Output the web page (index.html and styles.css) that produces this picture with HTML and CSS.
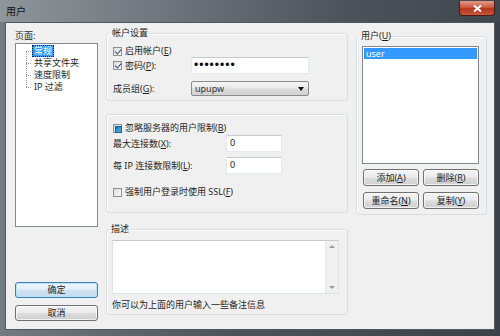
FILE: index.html
```html
<!DOCTYPE html>
<html lang="zh-CN">

<head>
  <meta charset="UTF-8" />
  <title>用户</title>
  <link rel="stylesheet" href="styles.css">
</head>

<body>
  <div class="window">
    <div class="titlebar">
      <span class="title">用户</span>
      <div class="close">
        <svg width="11" height="9" viewBox="0 0 11 9"><path d="M2 1.5 L9 7.5 M9 1.5 L2 7.5" stroke="#fff" stroke-width="2" /></svg>
      </div>
    </div>

    <div class="client">
      <!-- Page tree + dialog buttons -->
      <div class="col-pages">
        <div class="caption">页面:</div>
        <div class="tree">
          <ul>
            <li><span class="selected">常规</span></li>
            <li><span>共享文件夹</span></li>
            <li><span>速度限制</span></li>
            <li><span>IP 过滤</span></li>
          </ul>
        </div>
        <div class="dialog-buttons">
          <div class="btn default">确定</div>
          <div class="btn">取消</div>
        </div>
      </div>

      <!-- General settings -->
      <div class="col-settings">
        <fieldset class="group account">
          <legend>帐户设置</legend>
          <div class="check-row"><span class="check checked"></span>启用帐户(<u>E</u>)</div>
          <div class="field-row">
            <div class="check-row field-label"><span class="check checked"></span>密码(<u>P</u>):</div>
            <div class="input password">••••••••</div>
          </div>
          <div class="field-row group-row">
            <span class="field-label">成员组(<u>G</u>):</span>
            <div class="combo">upupw<span class="arrow"></span></div>
          </div>
        </fieldset>

        <fieldset class="group limits">
          <div class="check-row"><span class="check partial"></span>忽略服务器的用户限制(<u>B</u>)</div>
          <div class="field-row max-row">
            <span class="field-label">最大连接数(<u>X</u>):</span>
            <div class="input number">0</div>
          </div>
          <div class="field-row ip-row">
            <span class="field-label">每 IP 连接数限制(<u>L</u>):</span>
            <div class="input number">0</div>
          </div>
          <div class="check-row ssl-row"><span class="check"></span>强制用户登录时使用 SSL(<u>F</u>)</div>
        </fieldset>

        <fieldset class="group notes">
          <legend>描述</legend>
          <div class="memo">
            <div class="memo-text"></div>
            <div class="scrollbar">
              <span class="arrow-up"></span>
              <span class="arrow-down"></span>
            </div>
          </div>
          <div class="hint">你可以为上面的用户输入一些备注信息</div>
        </fieldset>
      </div>

      <!-- User list -->
      <div class="col-users">
        <fieldset class="group users">
          <legend>用户(<u>U</u>)</legend>
          <div class="listbox">
            <div class="list-item selected">user</div>
          </div>
          <div class="user-buttons">
            <div class="btn">添加(<u>A</u>)</div>
            <div class="btn">删除(<u>R</u>)</div>
            <div class="btn">重命名(<u>N</u>)</div>
            <div class="btn">复制(<u>Y</u>)</div>
          </div>
        </fieldset>
      </div>
    </div>
  </div>
</body>

</html>
```

FILE: styles.css
```css
/* Base */
* {
  box-sizing: border-box;
}

body {
  margin: 0;
  background: #3a4148;
  font-family: "Noto Sans", "Noto Sans CJK SC", sans-serif;
  font-size: 9px;
  line-height: 12px;
  color: #1e1e1e;
}

u {
  text-decoration: underline;
}

/* Window frame */
.window {
  width: 500px;
  height: 336px;
  display: flex;
  flex-direction: column;
  background: linear-gradient(to right, #747b82, #4d545b 45%, #3b4249);
}

.titlebar {
  height: 22px;
  flex: none;
  display: flex;
  justify-content: space-between;
  align-items: flex-start;
  padding: 0 5px 0 6px;
  background: linear-gradient(to right, #8e959b, #6c737a 35%, #4b5259 70%, #40474e);
}

.title {
  margin-top: 5px;
  font-size: 10px;
  line-height: 12px;
  color: #121212;
}

.close {
  width: 36px;
  height: 15px;
  margin-top: 1px;
  display: flex;
  align-items: center;
  justify-content: center;
  border: 1px solid #4a1b12;
  border-top: none;
  border-radius: 0 0 4px 4px;
  background: linear-gradient(#e39a86, #cf5a40 45%, #b3341c 55%, #c9583c);
}

.client {
  flex: 1;
  margin: 0 5px 6px;
  border: 1px solid #505860;
  background: #f0f0f0;
  display: flex;
  gap: 8px;
  padding: 4px 7px 8px 9px;
}

/* Left column */
.col-pages {
  width: 83px;
  display: flex;
  flex-direction: column;
}

.caption {
  margin-top: 3px;
  height: 12px;
}

.tree {
  height: 184px;
  margin-top: 1px;
  background: #fff;
  border: 1px solid #828790;
}

.tree ul {
  position: relative;
  margin: 0;
  padding: 1px 0 0 16px;
  list-style: none;
}

.tree ul::before {
  content: "";
  position: absolute;
  left: 10px;
  top: 7px;
  height: 36px;
  border-left: 1px dotted #9a9a9a;
}

.tree li {
  position: relative;
  height: 12px;
}

.tree li::before {
  content: "";
  position: absolute;
  left: -6px;
  top: 6px;
  width: 5px;
  border-top: 1px dotted #9a9a9a;
}

.tree li span {
  display: inline-block;
  padding: 0 2px;
  height: 12px;
}

.tree li span.selected {
  background: #3399ff;
  color: #fff;
  outline: 1px dotted #1e1e1e;
  outline-offset: -1px;
}

.dialog-buttons {
  margin-top: auto;
  display: flex;
  flex-direction: column;
  gap: 7px;
}

/* Buttons */
.btn {
  height: 16px;
  display: flex;
  align-items: center;
  justify-content: center;
  border: 1px solid #707070;
  border-radius: 3px;
  background: linear-gradient(#f4f4f4, #ebebeb 48%, #dddddd 52%, #cfcfcf);
  box-shadow: inset 0 0 0 1px rgba(255, 255, 255, 0.7);
  color: #1e1e1e;
}

.btn.default {
  border-color: #3c7fb1;
  background: linear-gradient(#eef6fb, #e1eef7 48%, #cfe3f1 52%, #c3dbee);
  box-shadow: inset 0 0 0 1px #b9e3f9;
}

/* Group boxes */
.group {
  margin: 0;
  min-width: 0;
  border: 1px solid #d5dfe5;
  border-radius: 3px;
  box-shadow: inset 1px 1px 0 #fff;
}

.group legend {
  padding: 0 2px;
  margin-left: -3px;
  line-height: 12px;
}

.col-settings {
  width: 242px;
  display: flex;
  flex-direction: column;
}

.account {
  padding: 6px 0 4px 6px;
}

.limits {
  margin-top: 13px;
  padding: 7px 0 14px 6px;
}

.notes {
  margin-top: 10px;
  padding: 5px 8px 3px 5px;
}

.check-row {
  display: flex;
  align-items: center;
  height: 12px;
}

.check {
  width: 9px;
  height: 9px;
  margin-right: 3px;
  flex: none;
  border: 1px solid #8e8f8f;
  background: linear-gradient(135deg, #dcdcdc, #fbfbfb);
  position: relative;
}

.check.checked::after {
  content: "";
  position: absolute;
  left: 2px;
  top: 0;
  width: 3px;
  height: 5px;
  border: solid #33477c;
  border-width: 0 1.5px 1.5px 0;
  transform: rotate(40deg);
}

.check.partial::after {
  content: "";
  position: absolute;
  left: 1px;
  top: 1px;
  width: 5px;
  height: 5px;
  background: linear-gradient(135deg, #1f7ac4, #4fb3d9);
  border: 1px solid #1a5f93;
}

.field-row {
  display: flex;
  align-items: center;
  height: 17px;
}

.account .field-label {
  width: 78px;
}

.group-row {
  margin-top: 7px;
  height: 15px;
}

.limits .field-label {
  width: 113px;
}

.max-row {
  margin-top: 1px;
}

.ip-row {
  margin-top: 5px;
}

.ssl-row {
  margin-top: 12px;
}

/* Inputs */
.input {
  height: 17px;
  background: #fff;
  border: 1px solid #e3e9ef;
  border-top-color: #c5cad0;
}

.password {
  width: 118px;
  padding-left: 2px;
  font-family: "Liberation Sans", sans-serif;
  font-size: 12px;
  line-height: 15px;
  letter-spacing: 1px;
  color: #000;
}

.number {
  width: 56px;
  padding: 1px 3px;
  line-height: 12px;
}

.combo {
  width: 118px;
  height: 15px;
  display: flex;
  align-items: center;
  justify-content: space-between;
  padding: 0 4px 0 3px;
  border: 1px solid #8a8a8a;
  border-radius: 2px;
  background: linear-gradient(#f5f5f5, #e9e9e9 48%, #dcdcdc 52%, #d2d2d2);
  color: #333;
}

.combo .arrow {
  width: 0;
  height: 0;
  border-left: 3px solid transparent;
  border-right: 3px solid transparent;
  border-top: 4px solid #111;
}

/* Description */
.memo {
  height: 54px;
  display: flex;
  background: #fff;
  border: 1px solid #dde2e7;
  border-top-color: #c5cad0;
}

.memo-text {
  flex: 1;
}

.scrollbar {
  width: 13px;
  display: flex;
  flex-direction: column;
  justify-content: space-between;
  align-items: center;
  padding: 4px 0;
  background: #f0f0f0;
  border-left: 1px solid #e6e6e6;
}

.arrow-up,
.arrow-down {
  width: 0;
  height: 0;
  border-left: 3px solid transparent;
  border-right: 3px solid transparent;
}

.arrow-up {
  border-bottom: 3px solid #9a9a9a;
}

.arrow-down {
  border-top: 3px solid #9a9a9a;
}

.hint {
  margin-top: 5px;
  height: 12px;
}

/* User list */
.col-users {
  width: 131px;
  padding-top: 3px;
}

.users {
  padding: 4px 7px 5px 5px;
}

.listbox {
  height: 118px;
  padding: 1px;
  background: #fff;
  border: 1px solid #828790;
}

.list-item {
  height: 11px;
  line-height: 11px;
  padding-left: 2px;
}

.list-item.selected {
  background: #3399ff;
  color: #fff;
}

.user-buttons {
  margin: 5px 0 0 1px;
  display: grid;
  grid-template-columns: 56px 56px;
  gap: 6px 4px;
}

.user-buttons .btn {
  height: 17px;
}
```
